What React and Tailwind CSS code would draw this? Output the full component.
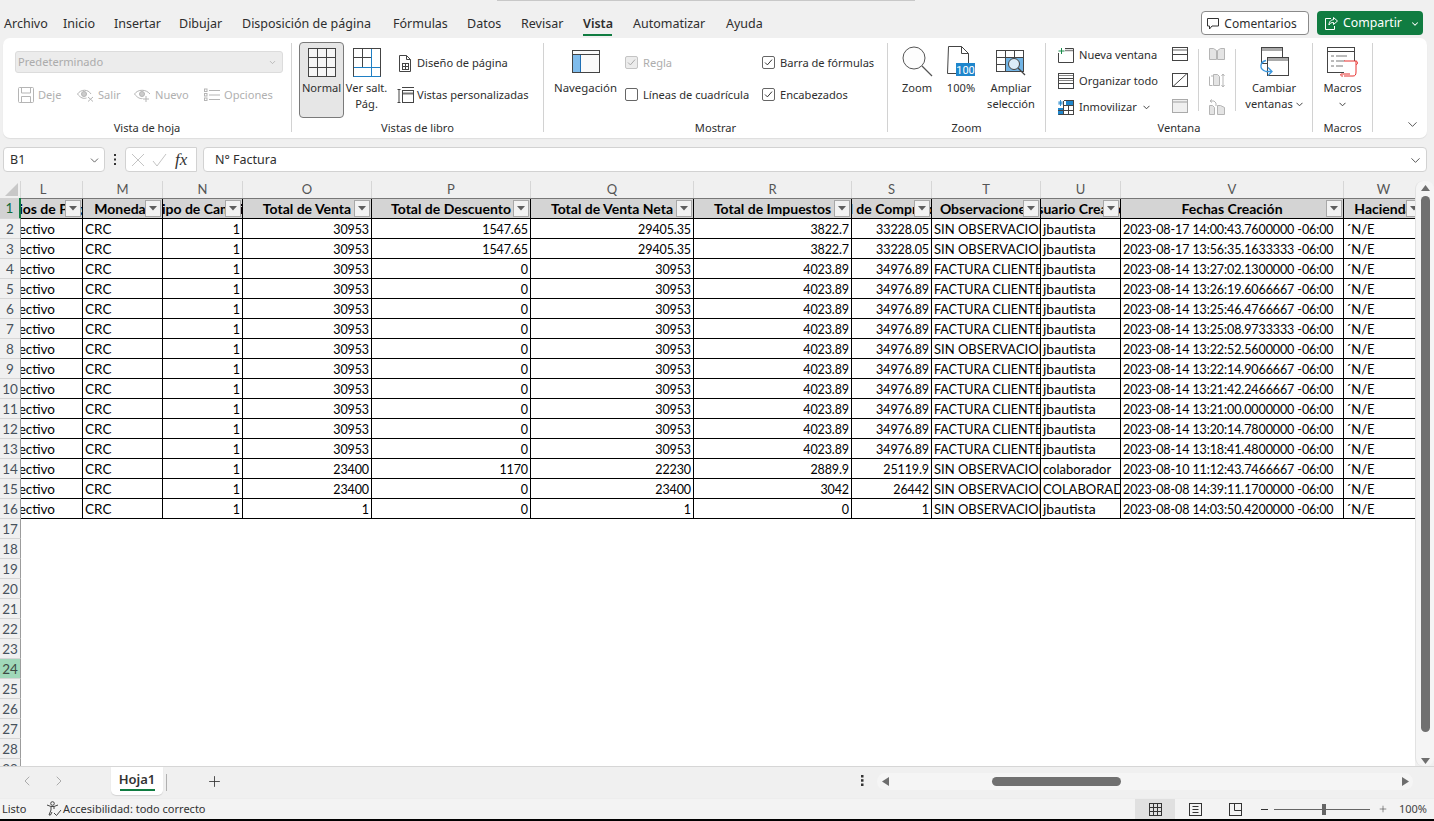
import React from "react";
import { ChevronDown, ChevronLeft, ChevronRight, Plus } from "lucide-react";

const columns = [
  { letter: "L", width: "w-[62px]" },
  { letter: "M", width: "w-[80px]" },
  { letter: "N", width: "w-[80px]" },
  { letter: "O", width: "w-[129px]" },
  { letter: "P", width: "w-[159px]" },
  { letter: "Q", width: "w-[163px]" },
  { letter: "R", width: "w-[158px]" },
  { letter: "S", width: "w-[80px]" },
  { letter: "T", width: "w-[109px]" },
  { letter: "U", width: "w-[80px]" },
  { letter: "V", width: "w-[223px]" },
  { letter: "W", width: "w-[80px]" },
];

const headers = [
  "Medios de Pago",
  "Moneda",
  "Tipo de Cambio",
  "Total de Venta",
  "Total de Descuento",
  "Total de Venta Neta",
  "Total de Impuestos",
  "Total de Comprobante",
  "Observaciones",
  "Usuario Creación",
  "Fechas Creación",
  "Hacienda",
];

const SIN = "SIN OBSERVACION";
const FAC = "FACTURA CLIENTE";
const rows = [
  ["30953", "1547.65", "29405.35", "3822.7", "33228.05", SIN, "jbautista", "2023-08-17 14:00:43.7600000 -06:00"],
  ["30953", "1547.65", "29405.35", "3822.7", "33228.05", SIN, "jbautista", "2023-08-17 13:56:35.1633333 -06:00"],
  ["30953", "0", "30953", "4023.89", "34976.89", FAC, "jbautista", "2023-08-14 13:27:02.1300000 -06:00"],
  ["30953", "0", "30953", "4023.89", "34976.89", FAC, "jbautista", "2023-08-14 13:26:19.6066667 -06:00"],
  ["30953", "0", "30953", "4023.89", "34976.89", FAC, "jbautista", "2023-08-14 13:25:46.4766667 -06:00"],
  ["30953", "0", "30953", "4023.89", "34976.89", FAC, "jbautista", "2023-08-14 13:25:08.9733333 -06:00"],
  ["30953", "0", "30953", "4023.89", "34976.89", SIN, "jbautista", "2023-08-14 13:22:52.5600000 -06:00"],
  ["30953", "0", "30953", "4023.89", "34976.89", FAC, "jbautista", "2023-08-14 13:22:14.9066667 -06:00"],
  ["30953", "0", "30953", "4023.89", "34976.89", FAC, "jbautista", "2023-08-14 13:21:42.2466667 -06:00"],
  ["30953", "0", "30953", "4023.89", "34976.89", FAC, "jbautista", "2023-08-14 13:21:00.0000000 -06:00"],
  ["30953", "0", "30953", "4023.89", "34976.89", FAC, "jbautista", "2023-08-14 13:20:14.7800000 -06:00"],
  ["30953", "0", "30953", "4023.89", "34976.89", FAC, "jbautista", "2023-08-14 13:18:41.4800000 -06:00"],
  ["23400", "1170", "22230", "2889.9", "25119.9", SIN, "colaborador", "2023-08-10 11:12:43.7466667 -06:00"],
  ["23400", "0", "23400", "3042", "26442", SIN, "COLABORADOR", "2023-08-08 14:39:11.1700000 -06:00"],
  ["1", "0", "1", "0", "1", SIN, "jbautista", "2023-08-08 14:03:50.4200000 -06:00"],
];

const emptyRows = [17, 18, 19, 20, 21, 22, 23, 24, 25, 26, 27, 28, 29];
const tabs = [
  { label: "Archivo", width: "w-[59px]" },
  { label: "Inicio", width: "w-[51px]" },
  { label: "Insertar", width: "w-[65px]" },
  { label: "Dibujar", width: "w-[63px]" },
  { label: "Disposición de página", width: "w-[151px]" },
  { label: "Fórmulas", width: "w-[74px]" },
  { label: "Datos", width: "w-[54px]" },
  { label: "Revisar", width: "w-[62px]" },
  { label: "Vista", width: "w-[50px]" },
  { label: "Automatizar", width: "w-[93px]" },
  { label: "Ayuda", width: "w-[40px]" },
];

const NUM = "text-[12.5px] tracking-[-0.1px] pt-[3px]";

function Cell({ width, right, text = "pt-px", children }) {
  return (
    <div className={`${width} shrink-0 flex items-center overflow-hidden whitespace-nowrap border-r border-black px-[2px] ${right ? "justify-end" : ""} ${text}`}>
      {children}
    </div>
  );
}

function RowHeader({ n, active, current }) {
  let tone = "bg-[#f0f0f0] text-[#47525c]";
  if (active) tone = "bg-[#d2d2d2] text-[#0f6b3a] border-r-2 border-r-[#107c41]";
  if (current) tone = "bg-[#a0d8b9] text-[#3c4a44]";
  return (
    <div className={`w-[21px] shrink-0 h-full flex items-center justify-center pt-px text-[13.5px] border-b border-b-[#d6d6d6] border-r border-r-[#9c9c9c] ${tone}`}>
      {n}
    </div>
  );
}

function FilterButton() {
  return (
    <div className="absolute right-px top-px w-[16px] h-[17px] bg-[#f2f2f2] border border-[#a8a8a8] flex items-center justify-center">
      <svg width="8" height="5" viewBox="0 0 8 5"><path d="M0 0h8L4 4.5z" fill="#5f5f5f" /></svg>
    </div>
  );
}

function HeaderCell({ col, text, i }) {
  const first = i === 0;
  return (
    <div className={`${col.width} shrink-0 relative flex items-center overflow-hidden whitespace-nowrap border-r border-black font-bold text-[14px] ${first ? "justify-end" : "justify-center"}`}>
      <span className={`shrink-0 ${first ? "-mr-[8px]" : ""} ${i === 1 ? "mr-[5px]" : ""}`}>{text}</span>
      <FilterButton />
    </div>
  );
}

function Group({ width, label, children }) {
  return (
    <div className={`${width} shrink-0 h-full flex flex-col`}>
      <div className="flex-1 flex items-start min-h-0">{children}</div>
      <div className="h-[18px] text-center leading-[16px]">{label}</div>
    </div>
  );
}

function Sep() {
  return <div className="w-px h-[89px] mt-[5px] shrink-0 bg-[#d2d2d2]" />;
}

function LargeButton({ width, icon, lines, selected, chevron }) {
  return (
    <div className={`${width} shrink-0 h-[76px] mt-[4px] flex flex-col items-center rounded-[4px] ${selected ? "bg-[#e6e6e6] border border-[#7a7a7a]" : "border border-transparent"}`}>
      <div className="h-[33px] mt-[1px] flex items-end justify-center">{icon}</div>
      <div className="leading-[16px] text-center whitespace-nowrap mt-[3px]">
        {lines.map((line) => <div key={line}>{line}</div>)}
        {chevron}
      </div>
    </div>
  );
}

function Check({ checked, disabled, label }) {
  return (
    <div className={`flex items-center gap-[5px] whitespace-nowrap ${disabled ? "text-[#adadad]" : ""}`}>
      <div className={`w-[13px] h-[13px] rounded-[2px] border flex items-center justify-center ${disabled ? "border-[#c4c4c4] bg-[#ececec]" : "border-[#666] bg-white"}`}>
        {checked && (
          <svg width="9" height="9" viewBox="0 0 9 9" fill="none">
            <path d="M1 4.5l2.4 2.4L8 1.6" stroke={disabled ? "#aaa" : "#333"} strokeWidth="1" />
          </svg>
        )}
      </div>
      {label}
    </div>
  );
}

function SmallChevron({ className = "" }) {
  return (
    <svg className={`inline-block ${className}`} width="7" height="5" viewBox="0 0 7 5" fill="none">
      <path d="M.5 .8L3.5 3.8L6.5 .8" stroke="#444" strokeWidth="1" />
    </svg>
  );
}

const G = "#444";

function GridIcon() {
  return (
    <svg width="28" height="29" viewBox="0 0 28 29" fill="none" stroke={G}>
      <rect x=".5" y=".5" width="27" height="28" fill="#f6f6f6" />
      <path d="M9.5 1v27M18.5 1v27M1 9.5h26M1 19.5h26" />
    </svg>
  );
}

function PageBreakIcon() {
  return (
    <svg width="28" height="29" viewBox="0 0 28 29" fill="none">
      <rect x=".5" y=".5" width="27" height="28" fill="#fff" stroke={G} />
      <path d="M9.5 1v18M1 9.5h18" stroke={G} />
      <path d="M18.5 1v27M1 19.5h26" stroke="#1f7fc4" />
      <path d="M.5 28.5h27" stroke="#1f7fc4" />
    </svg>
  );
}

function PageLayoutIcon() {
  return (
    <svg width="14" height="17" viewBox="0 0 14 17" fill="none" stroke={G}>
      <path d="M1.5 .5h7l4 4v12h-11z" />
      <path d="M8.5 .5v4h4" />
      <rect x="4.5" y="8.5" width="6" height="6" />
      <path d="M7.5 9v5M5 11.5h5" />
    </svg>
  );
}

function CustomViewsIcon() {
  return (
    <svg width="18" height="17" viewBox="0 0 18 17" fill="none" stroke={G}>
      <path d="M.5 2.5h3M.5 15.5h3M2 3v12" />
      <path d="M5 .5h12" />
      <rect x="5.5" y="3.5" width="11" height="12" />
      <path d="M6 6.5h10" strokeWidth="2" stroke="#777" />
    </svg>
  );
}

function NavIcon() {
  return (
    <svg width="28" height="23" viewBox="0 0 28 23">
      <rect x=".5" y=".5" width="27" height="22" fill="#fafafa" stroke={G} />
      <rect x="1" y="5" width="8" height="17" fill="#7fbcec" />
      <path d="M1 4.5h26" stroke={G} />
      <path d="M8.5 5v17" stroke="#1f6fb4" />
    </svg>
  );
}

function MagnifierIcon() {
  return (
    <svg width="31" height="31" viewBox="0 0 31 31" fill="none" stroke="#555">
      <circle cx="12" cy="12" r="11" fill="#fdfdfd" />
      <path d="M20 20l10 10" strokeWidth="1.3" />
    </svg>
  );
}

function HundredIcon() {
  return (
    <svg width="28" height="31" viewBox="0 0 28 31" fill="none">
      <path d="M1.5 .5h13l7 7v20h-21z" stroke={G} fill="#fff" />
      <path d="M14.5 .5v7h7" stroke={G} />
      <rect x="9" y="17" width="19" height="13" fill="#1f86cc" />
      <text x="18.5" y="28" textAnchor="middle" fontSize="11" fill="#fff" fontFamily="Roboto, sans-serif">100</text>
    </svg>
  );
}

function FitIcon() {
  return (
    <svg width="31" height="27" viewBox="0 0 31 27" fill="none">
      <rect x=".5" y=".5" width="27" height="21" stroke={G} fill="#fff" />
      <rect x="9" y="7" width="18" height="14" fill="#72b5e6" />
      <path d="M9.5 1v21M18.5 1v6M1 7.5h26M1 14.5h8" stroke={G} />
      <circle cx="18" cy="14" r="5.5" fill="#dcecf8" stroke={G} />
      <path d="M22 18l7 7" stroke={G} strokeWidth="1.2" />
    </svg>
  );
}

function NewWindowIcon() {
  return (
    <svg width="16" height="15" viewBox="0 0 16 15" fill="none">
      <path d="M.5 5v9.5h15V.5H7" stroke={G} />
      <path d="M7 2.5h8" stroke="#888" strokeWidth="1.5" />
      <path d="M3.5 0v6M.5 3h6" stroke="#1a8a4a" />
    </svg>
  );
}

function ArrangeIcon() {
  return (
    <svg width="16" height="16" viewBox="0 0 16 16" fill="none" stroke={G}>
      <rect x=".5" y=".5" width="15" height="15" />
      <path d="M1 5.5h14M1 10.5h14" />
      <path d="M1 2.5h14M1 7.5h14" stroke="#888" />
    </svg>
  );
}

function FreezeIcon() {
  return (
    <svg width="16" height="15" viewBox="0 0 16 15" fill="none">
      <rect x="0" y="8" width="5" height="7" fill="#1f86cc" />
      <rect x="8" y="1" width="8" height="5" fill="#1f86cc" />
      <path d="M5.5 1v14M10.5 6v9M5 5.5h11M0 10.5h16M.5 14.5h15.5M15.5 1v14M6 .5h10" stroke={G} />
      <path d="M2.5 0v6M0 3h5M.8 1.2l3.4 3.6M4.2 1.2L.8 4.8" stroke="#1f86cc" strokeWidth=".9" />
    </svg>
  );
}

function PaneIcon({ kind }) {
  if (kind === "split") {
    return (
      <svg width="16" height="14" viewBox="0 0 16 14" fill="none" stroke={G}>
        <rect x=".5" y=".5" width="15" height="13" />
        <path d="M1 3h14" stroke="#999" strokeWidth="1.5" />
        <path d="M1 7.5h14" />
      </svg>
    );
  }
  if (kind === "hide") {
    return (
      <svg width="16" height="14" viewBox="0 0 16 14" fill="none" stroke={G}>
        <rect x=".5" y=".5" width="15" height="13" />
        <path d="M1 13.5L15 .5" />
      </svg>
    );
  }
  return (
    <svg width="16" height="14" viewBox="0 0 16 14" fill="#f0f0f0" stroke="#aaa">
      <rect x=".5" y=".5" width="15" height="13" />
      <path d="M1 3h14" stroke="#bbb" strokeWidth="1.5" />
    </svg>
  );
}

function SideBySideIcon({ kind }) {
  return (
    <svg width="16" height="16" viewBox="0 0 16 16" fill="#e4e4e4" stroke="#b5b5b5">
      {kind === "sync" ? (
        <>
          <path d="M.5 3.500v9h3M2 3h3" fill="none" />
          <path d="M4.500 1.500h4l2 2v9h-6z" />
          <path d="M14 1v13M12.500 3L14 1l1.500 2M12.500 12L14 14l1.500-2" fill="none" />
        </>
      ) : kind === "reset" ? (
        <>
          <path d="M.5 6.500h3l2 2v7h-5zM8.500 6.500h3l4 2v7h-7z" />
          <path d="M3 3.500L1 2M1 2L3 .5M1 2h4l2 2v3" fill="none" />
        </>
      ) : (
        <>
          <path d="M.5 1.500h4l3 2v9h-7zM8.500 3.500l3-2h4v11h-7z" />
        </>
      )}
    </svg>
  );
}

function SwitchIcon() {
  return (
    <svg width="31" height="30" viewBox="0 0 31 30" fill="none">
      <rect x="2.500" y=".5" width="21" height="16" fill="#fff" stroke={G} />
      <rect x="3" y="1" width="20" height="3" fill="#aaa" />
      <rect x="8.500" y="10.500" width="21" height="18" fill="#fff" stroke={G} />
      <rect x="9" y="11" width="20" height="3" fill="#aaa" />
      <path d="M7 13.500C1 15 -.5 22 7 24.500H12" stroke="#3a96dd" strokeWidth="1.300" />
      <path d="M9 20.500L13 24.500L9 28.500" stroke="#3a96dd" strokeWidth="1.300" />
    </svg>
  );
}

function MacrosIcon() {
  return (
    <svg width="31" height="30" viewBox="0 0 31 30" fill="none">
      <rect x=".5" y=".5" width="27" height="25" fill="#fff" stroke={G} />
      <path d="M1 4.500h26" stroke={G} />
      <path d="M4 9h3M4 14h3M4 19h3M9 9h11M9 14h9M9 19h7" stroke="#777" />
      <path d="M17 14h12v11c0 3-1 4-3 4h-9" fill="#fff" stroke="#e8312f" />
      <path d="M16 29h-1c-1 0-2-1-1-2h9" stroke="#e8312f" />
      <path d="M29 14c1 0 1.500 1 1.500 2s-.5 1.500-1.500 1.500" stroke="#e8312f" />
    </svg>
  );
}

function SmallDisabled({ icon, label }) {
  return (
    <div className="flex items-center gap-[4px] text-[#b0b0b0] whitespace-nowrap">
      {icon}
      {label}
    </div>
  );
}

export default function App() {
  return (
    <div className="relative w-[1434px] h-[821px] overflow-hidden flex flex-col bg-[#f0f0f0] text-[#2e2e2e] text-[11.1px] font-['Noto_Sans',sans-serif]">
      {/* resto de la barra de titulo */}
      <div className="absolute top-0 left-[497px] w-[418px] h-px bg-[#c8c8c8]" />

      {/* Tabs */}
      <div className="h-[38px] shrink-0 flex items-start">
        <div className="flex pl-[4px] pt-[15px] text-[12.5px] leading-[18px]">
          {tabs.map((tab) => (
            <div key={tab.label} className={`${tab.width} relative whitespace-nowrap ${tab.label === "Vista" ? "font-semibold" : ""}`}>
              {tab.label}
              {tab.label === "Vista" && <div className="absolute left-0 w-[29px] top-[19px] h-[2px] bg-[#107c41]" />}
            </div>
          ))}
        </div>
        <div className="ml-auto flex gap-[8px] pt-[11px] pr-[11px] text-[12px]">
          <div className="w-[108px] h-[24px] bg-white border border-[#8a8a8a] rounded-[4px] flex items-center justify-center gap-[5px] pr-[6px] pt-px">
            <svg width="12" height="12" viewBox="0 0 12 12" fill="none" stroke="#333">
              <path d="M.5 .5h11v7.500H5l-2.500 3V8H.5z" />
            </svg>
            Comentarios
          </div>
          <div className="w-[106px] h-[24px] bg-[#107c41] text-white text-[12.3px] rounded-[4px] flex items-center pl-[8px] gap-[5px] pt-px">
            <svg width="13" height="13" viewBox="0 0 13 13" fill="none" stroke="#fff">
              <path d="M6 1.500H.5v11h9V9M12.500 4L8.500 .5v2.200C5 3 4 5.500 4 8c1-2 2.500-2.600 4.500-2.500V7.500z" />
            </svg>
            Compartir
            <ChevronDown className="ml-auto mr-[3px]" size={10} strokeWidth={2.500} />
          </div>
        </div>
      </div>

      {/* Ribbon */}
      <div className="h-[100px] shrink-0 mx-[3px] w-[1424px] bg-white rounded-[7px] flex shadow-[0_1px_1px_rgba(0,0,0,0.08)]">
        <Group width="w-[288px]" label="Vista de hoja">
          <div className="flex flex-col pt-[13px] pl-[12px]">
            <div className="w-[268px] h-[22px] bg-[#ececec] border border-[#dcdcdc] rounded-[3px] flex items-center px-[2px] text-[#ababab] justify-between">
              Predeterminado
              <ChevronDown size={9} className="mr-[3px]" />
            </div>
            <div className="flex mt-[13px] ml-[3px] h-[18px] items-center">
              <div className="w-[59px]">
                <SmallDisabled label="Deje" icon={
                  <svg width="16" height="16" viewBox="0 0 16 16" fill="none" stroke="#b5b5b5">
                    <rect x=".5" y=".5" width="15" height="15" rx="1" />
                    <path d="M3.500 1v5h9V1M3.500 15V9.500h9V15" />
                  </svg>
                } />
              </div>
              <div className="w-[57px]">
                <SmallDisabled label="Salir" icon={
                  <svg width="17" height="14" viewBox="0 0 17 14" fill="none" stroke="#b5b5b5">
                    <path d="M.5 6C4 1 11 1 14 6M.5 6c3 4 6 5 9 4" />
                    <circle cx="7" cy="6" r="2.500" fill="#ccc" />
                    <path d="M11 9l5 4.500M16 9l-5 4.500" />
                  </svg>
                } />
              </div>
              <div className="w-[70px]">
                <SmallDisabled label="Nuevo" icon={
                  <svg width="17" height="14" viewBox="0 0 17 14" fill="none" stroke="#b5b5b5">
                    <path d="M.5 6C4 1 12 1 16 6M.5 6c3 4 6 5 8 4.500" />
                    <circle cx="8" cy="6" r="2.500" fill="#ccc" />
                    <path d="M12 8v6M9 11h6" />
                  </svg>
                } />
              </div>
              <SmallDisabled label="Opciones" icon={
                <svg width="16" height="14" viewBox="0 0 16 14" fill="none" stroke="#b5b5b5">
                  <path d="M5 2.500h11M5 7h11M5 11.500h11" />
                  <rect x=".5" y="1" width="2.500" height="2.500" />
                  <rect x=".5" y="5.500" width="2.500" height="2.500" />
                  <rect x=".5" y="10" width="2.500" height="2.500" />
                </svg>
              } />
            </div>
          </div>
        </Group>
        <Sep />
        <Group width="w-[251px]" label="Vistas de libro">
          <div className="flex pl-[7px]">
            <LargeButton width="w-[45px]" selected icon={<GridIcon />} lines={["Normal"]} />
            <LargeButton width="w-[45px]" icon={<PageBreakIcon />} lines={["Ver salt.", "Pág."]} />
            <div className="flex flex-col pt-[16px] ml-[4px] gap-[14px]">
              <div className="flex items-center h-[18px] gap-[5px] pl-[5px] whitespace-nowrap"><PageLayoutIcon />Diseño de página</div>
              <div className="flex items-center h-[18px] gap-[2px] pl-[4px] whitespace-nowrap"><CustomViewsIcon />Vistas personalizadas</div>
            </div>
          </div>
        </Group>
        <Sep />
        <Group width="w-[343px]" label="Mostrar">
          <div className="flex pl-[8px]">
            <div className="w-[67px] pt-[12px] flex flex-col items-center shrink-0">
              <NavIcon />
              <div className="leading-[16px] mt-[7px] whitespace-nowrap text-[11.4px]">Navegación</div>
            </div>
            <div className="flex flex-col pt-[16px] gap-[14px] ml-[6px] w-[137px]">
              <div className="h-[18px] flex items-center"><Check checked disabled label="Regla" /></div>
              <div className="h-[18px] flex items-center"><Check label="Líneas de cuadrícula" /></div>
            </div>
            <div className="flex flex-col pt-[16px] gap-[14px]">
              <div className="h-[18px] flex items-center"><Check checked label="Barra de fórmulas" /></div>
              <div className="h-[18px] flex items-center"><Check checked label="Encabezados" /></div>
            </div>
          </div>
        </Group>
        <Sep />
        <Group width="w-[157px]" label="Zoom">
          <div className="flex pl-[3px]">
            <LargeButton width="w-[52px]" icon={<MagnifierIcon />} lines={["Zoom"]} />
            <LargeButton width="w-[36px]" icon={<HundredIcon />} lines={["100%"]} />
            <LargeButton width="w-[64px]" icon={<FitIcon />} lines={["Ampliar", "selección"]} />
          </div>
        </Group>
        <Sep />
        <Group width="w-[266px]" label="Ventana">
          <div className="flex">
            <div className="w-[126px] shrink-0 pl-[12px] pt-[8px] flex flex-col gap-[8px]">
              <div className="h-[18px] flex items-center gap-[5px] whitespace-nowrap"><NewWindowIcon />Nueva ventana</div>
              <div className="h-[18px] flex items-center gap-[5px] whitespace-nowrap"><ArrangeIcon />Organizar todo</div>
              <div className="h-[18px] flex items-center gap-[5px] whitespace-nowrap"><FreezeIcon />Inmovilizar<SmallChevron className="ml-px" /></div>
            </div>
            <div className="w-[26px] shrink-0 pt-[9px] flex flex-col gap-[12px]">
              <PaneIcon kind="split" />
              <PaneIcon kind="hide" />
              <PaneIcon kind="unhide" />
            </div>
            <div className="w-px h-[62px] mt-[11px] bg-[#d2d2d2] shrink-0" />
            <div className="w-[36px] shrink-0 pl-[10px] pt-[9px] flex flex-col gap-[10px]">
              <SideBySideIcon kind="compare" />
              <SideBySideIcon kind="sync" />
              <SideBySideIcon kind="reset" />
            </div>
            <div className="w-px h-[62px] mt-[11px] bg-[#d2d2d2] shrink-0" />
            <LargeButton width="w-[76px]" icon={<SwitchIcon />} lines={["Cambiar"]} chevron={
              <div>ventanas <SmallChevron className="mb-[2px]" /></div>
            } />
          </div>
        </Group>
        <Sep />
        <Group width="w-[59px]" label="Macros">
          <LargeButton width="w-[59px]" icon={<MacrosIcon />} lines={["Macros"]} chevron={
            <div className="leading-[14px]"><SmallChevron /></div>
          } />
        </Group>
        <Sep />
        <div className="flex-1 flex items-end justify-end pb-[6px] pr-[7px]">
          <ChevronDown size={15} strokeWidth={1.300} className="text-[#333]" />
        </div>
      </div>

      {/* Formula bar */}
      <div className="h-[25px] mt-[9px] shrink-0 flex pl-[3px] pr-[7px] text-[12.5px]">
        <div className="w-[102px] bg-white border border-[#d2d2d2] rounded-[4px] flex items-center justify-between pl-[6px] pr-[3px] pt-px">
          B1
          <ChevronDown size={13} strokeWidth={1.500} className="text-[#444]" />
        </div>
        <div className="w-[20px] flex items-center justify-center">
          <svg width="3" height="11" viewBox="0 0 3 11" fill="#333"><rect y="0" width="2" height="2" /><rect y="4.500" width="2" height="2" /><rect y="9" width="2" height="2" /></svg>
        </div>
        <div className="w-[72px] bg-white border border-[#d2d2d2] rounded-l-[4px] flex items-center pl-[5px] gap-[7px]">
          <svg width="14" height="14" viewBox="0 0 14 14" stroke="#c4c4c4" fill="none"><path d="M1 1l12 12M13 1L1 13" /></svg>
          <svg width="15" height="14" viewBox="0 0 15 14" stroke="#c4c4c4" fill="none"><path d="M1 8l4 5L14 1" /></svg>
          <span className="font-['Liberation_Serif',serif] italic text-[17px] leading-none text-[#333] ml-[1px]">fx</span>
        </div>
        <div className="w-[6px]" />
        <div className="flex-1 bg-white border border-[#d2d2d2] rounded-[4px] flex items-center justify-between pl-[11px] pr-[3px] pt-px">
          N° Factura
          <ChevronDown size={15} strokeWidth={1.300} className="text-[#333]" />
        </div>
      </div>

      {/* Sheet */}
      <div className="flex-1 min-h-0 mt-[9px] flex">
        <div className="w-[1415px] shrink-0 flex flex-col overflow-hidden bg-white font-['Lato',sans-serif] text-[13.5px] text-black">
          <div className="h-[17px] shrink-0 flex bg-[#f0f0f0] text-[#555]">
            <div className="w-[21px] shrink-0 flex items-end justify-end border-r border-[#d6d6d6] pr-[2px] pb-[2px]">
              <svg width="13" height="13" viewBox="0 0 13 13"><path d="M13 0v13H0z" fill="#c8c8c8" /></svg>
            </div>
            {columns.map((col, i) => (
              <div key={col.letter} className={`${col.width} shrink-0 flex items-center justify-center border-r border-[#d6d6d6] text-[13px] ${i === 0 ? "pr-[17px]" : ""}`}>
                {col.letter}
              </div>
            ))}
          </div>
          <div className="flex-1 min-h-0 overflow-hidden">
            <div className="h-[21px] flex">
              <RowHeader n={1} active />
              <div className="flex bg-[#d4d4d4] border-t border-t-[#777] border-b border-b-black">
                {columns.map((col, i) => (
                  <HeaderCell key={col.letter} col={col} text={headers[i]} i={i} />
                ))}
              </div>
            </div>
            {rows.map((row, r) => (
              <div key={r} className="h-[20px] flex">
                <RowHeader n={r + 2} />
                <div className="flex border-b border-black">
                  <Cell width={columns[0].width} right><span className="shrink-0 mr-[25px]">Efectivo</span></Cell>
                  <Cell width={columns[1].width}>CRC</Cell>
                  <Cell width={columns[2].width} right text={NUM}>1</Cell>
                  <Cell width={columns[3].width} right text={NUM}>{row[0]}</Cell>
                  <Cell width={columns[4].width} right text={NUM}>{row[1]}</Cell>
                  <Cell width={columns[5].width} right text={NUM}>{row[2]}</Cell>
                  <Cell width={columns[6].width} right text={NUM}>{row[3]}</Cell>
                  <Cell width={columns[7].width} right text={NUM}>{row[4]}</Cell>
                  <Cell width={columns[8].width} text={row[5] === FAC ? "text-[12.5px] pt-[3px]" : "text-[13px] pt-[3px]"}>{row[5]}</Cell>
                  <Cell width={columns[9].width} text={row[6] === "jbautista" ? "text-[14px] pb-px" : "text-[13px] pt-[3px]"}>{row[6]}</Cell>
                  <Cell width={columns[10].width} text={NUM}>{row[7]}</Cell>
                  <Cell width={columns[11].width} text="text-[13px] pt-[3px]">´N/E</Cell>
                </div>
              </div>
            ))}
            {emptyRows.map((n) => (
              <div key={n} className="h-[20px] flex">
                <RowHeader n={n} current={n === 24} />
              </div>
            ))}
          </div>
        </div>
        {/* Vertical scrollbar */}
        <div className="w-[19px] shrink-0 flex flex-col items-center bg-[#f5f5f5] rounded-t-[8px] rounded-b-[8px] pt-[3px] border-l border-[#e2e2e2]">
          <svg width="9" height="6" viewBox="0 0 9 6" className="mt-[1px]"><path d="M4.500 0L9 6H0z" fill="#6e6e6e" /></svg>
          <div className="w-[9px] h-[536px] mt-[5px] rounded-full bg-[#707070]" />
          <svg width="9" height="6" viewBox="0 0 9 6" className="mt-auto mb-[2px]"><path d="M4.500 6L9 0H0z" fill="#6e6e6e" /></svg>
        </div>
      </div>

      {/* Sheet tabs */}
      <div className="h-[32px] shrink-0 flex border-t border-[#d6d6d6] bg-[#f0f0f0]">
        <div className="w-[111px] shrink-0 flex items-center pl-[19px] gap-[16px] pb-[4px]">
          <ChevronLeft size={16} strokeWidth={1.300} className="text-[#a0a0a0]" />
          <ChevronRight size={16} strokeWidth={1.300} className="text-[#a0a0a0]" />
        </div>
        <div className="w-[52px] h-[28px] shrink-0 bg-white rounded-b-[5px] flex flex-col items-center pt-[3px] font-semibold text-[13px] leading-[18px] text-[#333] shadow-[0_1px_1px_rgba(0,0,0,0.12)]">
          Hoja1
          <div className="w-[35px] h-[2px] bg-[#107c41] mt-[1px]" />
        </div>
        <div className="w-px h-[17px] mt-[7px] ml-[3px] bg-[#b0b0b0]" />
        <div className="ml-[39px] pt-[6px]"><Plus size={17} strokeWidth={1.200} className="text-[#333]" /></div>
        <div className="ml-[638px] pt-[8px]">
          <svg width="3" height="11" viewBox="0 0 3 11" fill="#333"><rect y="0" width="2.500" height="2.500" /><rect y="4.200" width="2.500" height="2.500" /><rect y="8.500" width="2.500" height="2.500" /></svg>
        </div>
        <div className="w-[536px] h-[17px] mt-[6px] ml-[13px] bg-[#f5f5f5] rounded-full flex items-center pl-[5px] pr-[4px]">
          <svg width="7" height="9" viewBox="0 0 7 9"><path d="M0 4.500L7 0v9z" fill="#6e6e6e" /></svg>
          <div className="w-[129px] h-[9px] ml-[103px] rounded-full bg-[#707070]" />
          <svg width="7" height="9" viewBox="0 0 7 9" className="ml-auto"><path d="M7 4.500L0 0v9z" fill="#6e6e6e" /></svg>
        </div>
      </div>

      {/* Status bar */}
      <div className="h-[21px] shrink-0 flex items-center bg-[#f3f3f3] text-[11px] text-[#333] border-t border-[#ededed]">
        <div className="w-[46px] pl-[2px] pt-px">Listo</div>
        <svg width="16" height="16" viewBox="0 0 16 16" fill="none" stroke="#444">
          <circle cx="6.500" cy="2.500" r="1.800" />
          <path d="M1 4l4 1.500h3L12 4M5 6v3l-2 5h1.500L6 11M8 6v2" />
          <path d="M8 12l2.500 2.500L15 9" />
        </svg>
        <div className="ml-px pt-px">Accesibilidad: todo correcto</div>
        <div className="ml-auto flex items-center h-full">
          <div className="w-[40px] h-full bg-[#e0e0e0] flex items-center justify-center">
            <svg width="13" height="13" viewBox="0 0 13 13" fill="none" stroke="#333"><rect x=".5" y=".5" width="12" height="12" /><path d="M4.500 1v11M8.500 1v11M1 4.500h11M1 8.500h11" /></svg>
          </div>
          <div className="w-[40px] flex items-center justify-center">
            <svg width="13" height="13" viewBox="0 0 13 13" fill="none" stroke="#333"><rect x=".5" y=".5" width="12" height="12" /><path d="M3.500 3.500h6M3.500 6.500h6M3.500 9.500h6" /></svg>
          </div>
          <div className="w-[40px] flex items-center justify-center">
            <svg width="13" height="13" viewBox="0 0 13 13" fill="none" stroke="#333"><rect x=".5" y=".5" width="12" height="12" /><path d="M5.500 1v6.500h7" /></svg>
          </div>
          <div className="w-[7px] h-px bg-[#333] ml-[6px]" />
          <div className="w-[96px] h-px bg-[#666] ml-[6px] mr-[8px] flex items-center justify-center">
            <div className="w-[4px] h-[11px] bg-[#666] ml-[4px]" />
          </div>
          <Plus size={10} strokeWidth={1.300} className="text-[#333]" />
          <div className="w-[46px] text-right pr-[7px] text-[#444] pt-px">100%</div>
        </div>
      </div>
      <div className="h-[2px] shrink-0 bg-black" />
    </div>
  );
}
